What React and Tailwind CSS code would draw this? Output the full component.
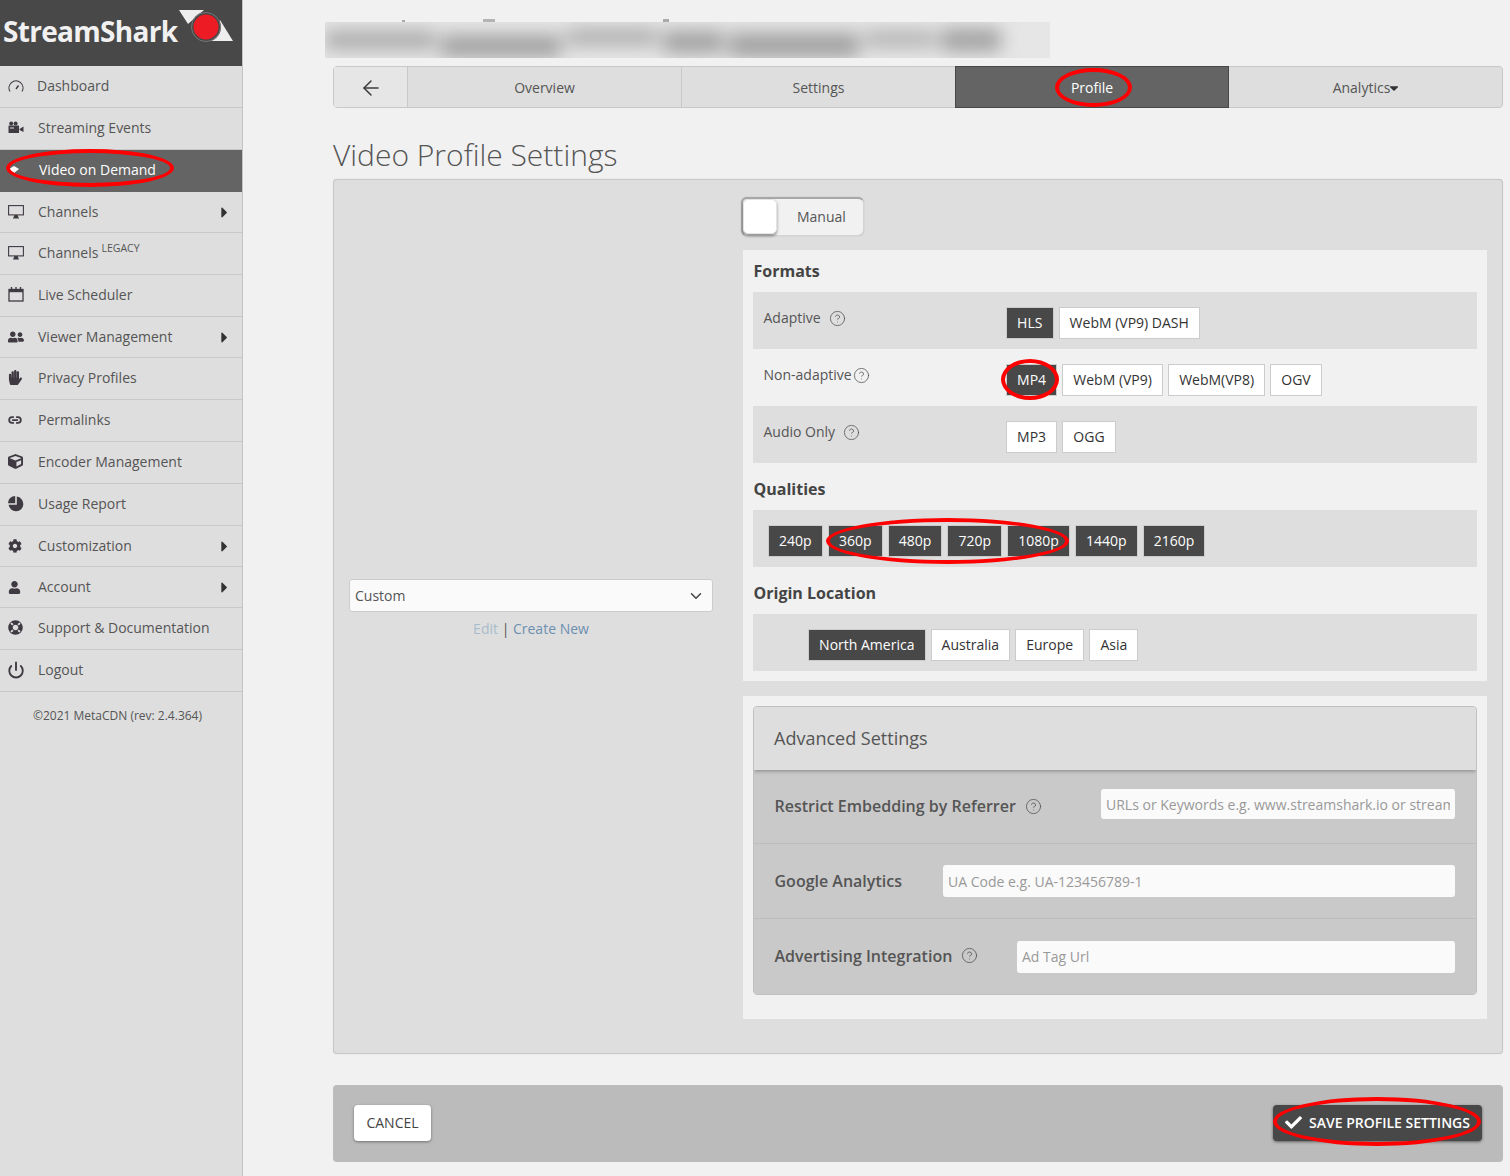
import React from 'react';
import { ArrowLeft, ChevronDown, CircleHelp, Link2, Power } from 'lucide-react';
import {
  FaUserFriends, FaHandPaper, FaCube, FaCog, FaUser, FaLifeRing, FaCaretRight, FaCaretDown, FaCheck,
} from 'react-icons/fa';

const GaugeIcon = () => (
  <svg width="16" height="14" viewBox="0 0 16 14" fill="none" stroke="currentColor" strokeWidth="1.1">
    <path d="M2 12.5 A7 7 0 1 1 14 12.5" />
    <path d="M8 10 L10.5 6.5" strokeWidth="1.4" />
  </svg>
);

const CameraIcon = () => (
  <svg width="16" height="13" viewBox="0 0 16 13" fill="currentColor">
    <circle cx="3.2" cy="2.4" r="2" />
    <circle cx="7.6" cy="2.4" r="2" />
    <rect x="0.5" y="4.5" width="10.5" height="7.5" rx="0.5" />
    <path d="M11.5 8 L15.5 5.5 V11 L11.5 9 Z" />
    <rect x="2" y="6.5" width="4" height="1" fill="#dedede" />
  </svg>
);

const MonitorIcon = () => (
  <svg width="16" height="14" viewBox="0 0 16 14" fill="none">
    <rect x="0.6" y="0.6" width="14.8" height="9.3" stroke="currentColor" strokeWidth="1.1" />
    <path d="M5 13.5 L6.5 10 H9.5 L11 13.5 Z" fill="currentColor" />
  </svg>
);

const CalendarIcon = () => (
  <svg width="16" height="15" viewBox="0 0 16 15" fill="none" stroke="currentColor">
    <rect x="1" y="2.5" width="14" height="11.5" strokeWidth="1.3" />
    <path d="M1 4 H15" strokeWidth="2.4" />
    <path d="M3.5 0 V3 M8 0 V3 M12.5 0 V3" strokeWidth="1.4" />
  </svg>
);

const PieIcon = () => (
  <svg width="16" height="16" viewBox="0 0 16 16" fill="currentColor">
    <path d="M8.8 0.6 A7.4 7.4 0 1 1 0.6 8.8 H8.8 Z" />
    <path d="M7.2 0 V7.2 H0 A7.2 7.2 0 0 1 7.2 0 Z" />
  </svg>
);

const VodIcon = () => (
  <svg width="12" height="10" viewBox="0 0 12 10"><path d="M1 4 L6 1 L11 4 L6 8 Z" fill="#fff" /></svg>
);

const menu = [
  { label: 'Dashboard', Icon: GaugeIcon, h: 'h-[42px] pb-[2px]', labelClass: '-ml-px' },
  { label: 'Streaming Events', Icon: CameraIcon, h: 'h-[42px] pb-[2px]' },
  { label: 'Video on Demand', Icon: VodIcon, active: true, h: 'h-[42px] pb-[2px]', labelClass: 'pl-px' },
  { label: 'Channels', Icon: MonitorIcon, arrow: true, h: 'h-[41px]' },
  { label: 'Channels', Icon: MonitorIcon, legacy: true, h: 'h-[42px] pb-[2px]' },
  { label: 'Live Scheduler', Icon: CalendarIcon, h: 'h-[42px] pb-[2px]' },
  { label: 'Viewer Management', Icon: () => <FaUserFriends size={16} />, arrow: true, h: 'h-[41px]' },
  { label: 'Privacy Profiles', Icon: () => <FaHandPaper size={15} className="-scale-x-100" />, h: 'h-[42px] pb-[2px]' },
  { label: 'Permalinks', Icon: () => <Link2 size={14} strokeWidth={3} />, h: 'h-[42px] pb-[2px]' },
  { label: 'Encoder Management', Icon: () => <FaCube size={15} />, h: 'h-[42px] pb-[2px]' },
  { label: 'Usage Report', Icon: PieIcon, h: 'h-[42px] pb-[2px]' },
  { label: 'Customization', Icon: () => <FaCog size={14} />, arrow: true, h: 'h-[41px]' },
  { label: 'Account', Icon: () => <FaUser size={13} />, arrow: true, h: 'h-[41px]' },
  { label: 'Support & Documentation', Icon: () => <FaLifeRing size={15} />, h: 'h-[42px] pb-[2px]' },
  { label: 'Logout', Icon: () => <Power size={18} strokeWidth={2.5} className="-ml-[1px]" />, h: 'h-[42px] pb-[2px]' },
];

const Ellipse = ({ className }) => (
  <span className={`absolute rounded-[50%] border-4 border-[#ff0000] pointer-events-none ${className}`} />
);

const Help = ({ className = '' }) => (
  <CircleHelp size={17} strokeWidth={1} className={`shrink-0 text-[#444] -ml-[2px] -mr-px ${className}`} />
);

const Chip = ({ children, on }) => (
  <span className={`h-8 px-[10.1px] flex items-center border border-[#ccc] text-sm whitespace-nowrap ${on ? 'bg-[#484848] text-white' : 'bg-white text-[#333]'}`}>
    {children}
  </span>
);

const Logo = () => (
  <svg width="56" height="44" viewBox="178 0 56 44" className="shrink-0 -mt-[11px]">
    <path d="M179 10 L204 10 L188 24 Z" fill="#eeeeee" />
    <path d="M220 20 L233 41 L208 41 Z" fill="#eeeeee" />
    <circle cx="206" cy="27" r="15" fill="#484848" />
    <circle cx="206" cy="27" r="14.5" fill="none" stroke="#8a8a8a" strokeWidth="0.7" />
    <circle cx="206" cy="27" r="12.5" fill="#ed1c24" />
  </svg>
);

const Sidebar = () => (
  <aside className="w-[243px] shrink-0 bg-[#dedede] border-r border-[#c4c4c4] min-h-[1176px]">
    <div className="h-[66px] bg-[#484848] flex items-start pl-[3px] pt-[11px]">
      <span className="w-[175px] text-[28px] leading-[40px] font-bold text-[#f1f1f1] tracking-[-0.7px]">StreamShark</span>
      <Logo />
    </div>
    {menu.map(({ label, Icon, arrow, legacy, active, h, labelClass = '' }) => (
      <div key={label + (legacy ? 'l' : '')} className={`${h} relative flex items-center text-sm border-b ${active ? 'bg-[#646464] text-white border-[#646464]' : 'border-[#c8c8c8] text-[#555]'}`}>
        <span className="w-[38px] pl-[8px] flex items-center shrink-0 text-[#3f3a42]">
          <Icon />
        </span>
        <span className={labelClass}>{label}</span>
        {legacy && <sup className="text-[10.5px] ml-[3px] mt-[2px]">LEGACY</sup>}
        {arrow && <FaCaretRight size={17} className="absolute right-[9px] text-[#333]" />}
        {active && <Ellipse className="left-[6px] top-[-1px] w-[168px] h-[38px]" />}
      </div>
    ))}
    <p className="mt-[16px] text-center text-xs text-[#555] pr-[7px]">©2021 MetaCDN (rev: 2.4.364)</p>
  </aside>
);

const Tabs = () => (
  <div className="h-[42px] flex border border-[#c8c8c8] rounded-sm bg-[#dedede] text-sm text-[#555]">
    <div className="w-[74px] shrink-0 flex items-center justify-center border-r border-[#c8c8c8] bg-[#e6e6e6]">
      <ArrowLeft size={24} strokeWidth={1.5} className="text-[#3c3c3c] mt-[2px]" />
    </div>
    <div className="w-[274px] flex items-center justify-center border-r border-[#c8c8c8] pt-px">Overview</div>
    <div className="w-[273px] flex items-center justify-center pt-px">Settings</div>
    <div className="w-[274px] relative flex items-center justify-center bg-[#646464] text-white border border-[#484848] -my-px pt-px">
      Profile
      <Ellipse className="left-[99px] top-[1px] w-[77px] h-[39px]" />
    </div>
    <div className="flex-1 flex items-center justify-center pt-px">
      Analytics<FaCaretDown size={14} className="-ml-[3px] -mr-[3px] text-[#333]" />
    </div>
  </div>
);

const Formats = () => (
  <section className="bg-[#f1f1f1] px-[10px] pb-[10px] h-[431px] ml-px">
    <h3 className="h-[42px] flex items-center text-base font-bold text-[#444] pl-[0.5px]">Formats</h3>
    <div className="h-[57px] bg-[#dedede] flex">
      <div className="w-[253px] pl-[10.5px] pt-[16px] flex items-start gap-[10px] text-sm text-[#555]"><span>Adaptive</span><Help className="mt-[2px]" /></div>
      <div className="flex gap-[5px] pt-[15px]"><Chip on>HLS</Chip><Chip>WebM (VP9) DASH</Chip></div>
    </div>
    <div className="h-[57px] flex">
      <div className="w-[253px] pl-[10.5px] pt-[16px] flex items-start gap-[3px] text-sm text-[#555]"><span>Non-adaptive</span><Help className="mt-[2px]" /></div>
      <div className="flex gap-[5px] pt-[15px]">
        <span className="relative flex">
          <Chip on>MP4</Chip>
          <Ellipse className="-left-[5px] -top-[5px] w-[58px] h-[41px]" />
        </span>
        <Chip>WebM (VP9)</Chip><Chip>WebM(VP8)</Chip><Chip>OGV</Chip>
      </div>
    </div>
    <div className="h-[57px] bg-[#dedede] flex">
      <div className="w-[253px] pl-[10.5px] pt-[16px] flex items-start gap-[10px] text-sm text-[#555]"><span>Audio Only</span><Help className="mt-[2px]" /></div>
      <div className="flex gap-[5px] pt-[15px]"><Chip>MP3</Chip><Chip>OGG</Chip></div>
    </div>
    <h3 className="h-[47px] pt-[4px] flex items-center text-base font-bold text-[#444] pl-[0.5px]">Qualities</h3>
    <div className="h-[57px] bg-[#dedede] flex items-start pt-[15px] gap-[5px] pl-[15px] relative">
      {['240p', '360p', '480p', '720p', '1080p', '1440p', '2160p'].map((q) => <Chip key={q} on>{q}</Chip>)}
      <Ellipse className="left-[73px] top-[8px] w-[243px] h-[46px]" />
    </div>
    <h3 className="h-[47px] pt-[4px] flex items-center text-base font-bold text-[#444] pl-[0.5px]">Origin Location</h3>
    <div className="h-[57px] bg-[#dedede] flex items-start pt-[15px] gap-[5px] pl-[55px]">
      <Chip on>North America</Chip><Chip>Australia</Chip><Chip>Europe</Chip><Chip>Asia</Chip>
    </div>
  </section>
);

const AdvRow = ({ label, help, placeholder, inputClass, rowClass }) => (
  <div className={`flex items-center pl-[20.5px] pr-[21px] bg-[#c9c9c9] ${rowClass}`}>
    <span className="text-base font-semibold text-[#555] whitespace-nowrap">{label}</span>
    {help && <Help className="ml-[9px]" />}
    <input readOnly placeholder={placeholder} className={`ml-auto h-8 px-[5px] bg-[#fafafa] rounded-[3px] text-sm outline-none placeholder:text-[#999] ${inputClass}`} />
  </div>
);

const Advanced = () => (
  <section className="bg-[#f1f1f1] mt-[15px] h-[323px] p-[10px] ml-px">
    <div className="rounded-[4px] border border-[#c0c0c0] overflow-hidden">
      <div className="h-[63px] bg-[#dedede] flex items-center pl-[20px] pb-[2px] text-lg text-[#555] shadow-[0_1px_4px_rgba(0,0,0,0.35)] relative">Advanced Settings</div>
      <AdvRow label="Restrict Embedding by Referrer" help placeholder="URLs or Keywords e.g. www.streamshark.io or streamshark" inputClass="w-[354px] h-[30px] -mt-[4px] placeholder:text-[#666]" rowClass="h-[74px] pb-[1px] border-b border-[#bdbdbd]" />
      <AdvRow label="Google Analytics" placeholder="UA Code e.g. UA-123456789-1" inputClass="w-[512px]" rowClass="h-[75px] border-b border-[#bdbdbd]" />
      <AdvRow label="Advertising Integration" help placeholder="Ad Tag Url" inputClass="w-[438px] mt-[2px]" rowClass="h-[75px] pb-[2px]" />
    </div>
  </section>
);

const App = () => (
  <div className="flex bg-[#f1f1f1] min-h-[1176px] text-[#555] font-['Open_Sans',sans-serif]">
    <Sidebar />
    <main className="flex-1 pl-[90px] pr-[7px]">
      <div className="h-[66px] pt-[18px] -ml-[8px] w-[725px]">
        <div className="h-[4px] flex items-end">
          <span className="ml-[77px] w-[3px] h-[2px] bg-[#aaa]" />
          <span className="ml-[78px] w-[12px] h-[3px] bg-[#b4b4b4]" />
          <span className="ml-[168px] w-[6px] h-[3px] bg-[#aaa]" />
        </div>
        <div className="h-[36px] overflow-hidden bg-[#e6e6e6]">
          <div className="flex gap-[6px] pt-[7px] blur-[9px]">
            <span className="h-[18px] w-[110px] mt-[2px] bg-[#a8a8a8]" />
            <span className="h-[22px] w-[120px] mt-[6px] bg-[#a0a0a0]" />
            <span className="h-[16px] w-[90px] bg-[#aaaaaa]" />
            <span className="h-[22px] w-[60px] mt-[2px] bg-[#a0a0a0]" />
            <span className="h-[24px] w-[130px] mt-[4px] bg-[#a0a0a0]" />
            <span className="h-[16px] w-[70px] mt-[2px] bg-[#b0b0b0]" />
            <span className="h-[22px] w-[60px] bg-[#a0a0a0]" />
          </div>
        </div>
      </div>
      <Tabs />
      <h1 className="h-[71px] pt-[26px] text-[30px] leading-[42px] font-light text-[#555]">Video Profile Settings</h1>
      <div className="h-[875px] flex bg-[#dedede] border border-[#c8c8c8] rounded-[4px] shadow-[0_0_1px_rgba(0,0,0,0.2)]">
        <div className="w-[408px] shrink-0 pl-[15px] pr-[29px] pt-[399px]">
          <div className="h-[33px] bg-[#fafafa] border border-[#ccc] rounded-[3px] flex items-center justify-between px-[5px] text-sm">
            Custom<ChevronDown size={18} className="mr-[2px] text-[#444]" />
          </div>
          <p className="mt-[7px] text-center text-sm text-[#6d8fb0]">
            <span className="text-[#a9bccb]">Edit</span> <span className="text-[#555]">|</span> Create New
          </p>
        </div>
        <div className="flex-1 pr-[15px] pt-[17px]">
          <div className="relative w-[123px] h-[39px] -ml-px bg-[#f1f1f1] border border-[#d4d4d4] border-t-2 border-t-[#a8a8a8] border-l-2 border-l-[#a8a8a8] rounded-[6px] flex items-center mb-[14px] shadow-[0_0_1px_rgba(0,0,0,0.3)]">
            <span className="absolute left-0 top-0 w-[34px] h-[35px] bg-white border border-[#e4e4e4] rounded-[5px] shadow-[0_2px_3px_rgba(0,0,0,0.4)]" />
            <span className="pl-[54px] text-sm text-[#555]">Manual</span>
          </div>
          <Formats />
          <Advanced />
        </div>
      </div>
      <div className="mt-[31px] h-[77px] bg-[#bbbbbb] rounded-[4px] flex items-center justify-between pl-[21px] pr-[21px] pb-[2px]">
        <button className="h-[36px] w-[77px] bg-white rounded-[4px] text-sm font-medium text-[#444] shadow-[0_1px_3px_rgba(0,0,0,0.4)]">CANCEL</button>
        <button className="relative h-[36px] w-[209px] bg-[#484848] rounded-[4px] text-sm font-semibold text-white flex items-center justify-center gap-[7px] shadow-[0_1px_3px_rgba(0,0,0,0.5)]">
          <FaCheck size={17} />SAVE PROFILE SETTINGS
          <Ellipse className="left-0 -top-[8px] w-[208px] h-[49px]" />
        </button>
      </div>
    </main>
  </div>
);

export default App;
